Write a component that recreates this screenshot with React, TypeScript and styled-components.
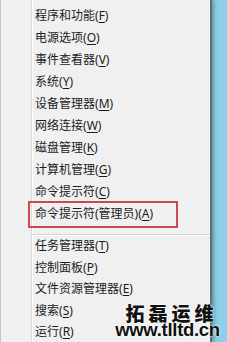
import React from "react";
import styled, { createGlobalStyle } from "styled-components";

const GlobalStyle = createGlobalStyle`
  html, body {
    margin: 0;
    padding: 0;
  }
  body {
    font-family: "Noto Sans", "Noto Sans CJK SC", sans-serif;
  }
`;

type Item = { label: string; key: string; highlight?: boolean };

const topItems: Item[] = [
  { label: "程序和功能", key: "F" },
  { label: "电源选项", key: "O" },
  { label: "事件查看器", key: "V" },
  { label: "系统", key: "Y" },
  { label: "设备管理器", key: "M" },
  { label: "网络连接", key: "W" },
  { label: "磁盘管理", key: "K" },
  { label: "计算机管理", key: "G" },
  { label: "命令提示符", key: "C" },
  { label: "命令提示符(管理员)", key: "A", highlight: true },
];

const bottomItems: Item[] = [
  { label: "任务管理器", key: "T" },
  { label: "控制面板", key: "P" },
  { label: "文件资源管理器", key: "E" },
  { label: "搜索", key: "S" },
  { label: "运行", key: "R" },
];

const App = () => {
  return (
    <Desktop>
      <GlobalStyle />
      <Menu>
        <Gutter />
        <Items>
          {topItems.map((it) => (
            <Row key={it.label} $highlight={it.highlight}>
              {it.label}(<u>{it.key}</u>)
            </Row>
          ))}
          <Separator />
          {bottomItems.map((it) => (
            <Row key={it.label} $compact>
              {it.label}(<u>{it.key}</u>)
            </Row>
          ))}
        </Items>
      </Menu>
      <Watermark>
        <span>拓磊运维</span>
        <small>www.tlltd.cn</small>
      </Watermark>
    </Desktop>
  );
};
export default App;

const Desktop = styled.div`
  position: relative;
  width: 227px;
  height: 342px;
  overflow: hidden;
  background-color: #8dd0e7;
`;

const Menu = styled.div`
  display: flex;
  width: 209px;
  height: 100%;
  background-color: #f0f0f0;
  border-left: 1px solid #c6c6c6;
  border-right: 2px solid #5f6f76;
  box-shadow: 2px 0 4px rgba(40, 70, 80, 0.45);
`;

const Gutter = styled.div`
  width: 30px;
  flex-shrink: 0;
  border-right: 1px solid #dadada;
  box-shadow: 1px 0 0 #ffffff;
`;

const Items = styled.div`
  flex: 1;
  padding-top: 5px;
  padding-left: 3px;
`;

const Row = styled.div<{ $highlight?: boolean; $compact?: boolean }>`
  position: relative;
  height: ${(p) => (p.$compact ? "21.5px" : "22px")};
  line-height: ${(p) => (p.$compact ? "21.5px" : "22px")};
  font-size: 12px;
  color: #1c1c1c;
  white-space: nowrap;
  u {
    text-underline-offset: 2px;
  }
  ${(p) =>
    p.$highlight &&
    `
    &::after {
      content: "";
      position: absolute;
      left: -7px;
      top: -2px;
      width: 146px;
      height: 23px;
      border: 2px solid #cd4a4c;
    }
  `}
`;

const Separator = styled.div`
  height: 1px;
  margin: 9px 0 0 -3px;
  background-color: #d6d6d6;
  box-shadow: 0 1px 0 #ffffff;
`;

const Watermark = styled.div`
  position: absolute;
  left: 110px;
  top: 304px;
  width: 115px;
  display: flex;
  flex-direction: column;
  align-items: center;
  color: #111111;
  text-shadow: 0 0 2px #ffffff, 0 0 2px #ffffff;
  span {
    font-family: "Noto Sans CJK SC", sans-serif;
    font-weight: 900;
    font-size: 19px;
    letter-spacing: 4px;
    line-height: 18px;
    padding-left: 8px;
  }
  small {
    font-family: "Liberation Sans", Arial, sans-serif;
    font-weight: 700;
    font-size: 18.5px;
    line-height: 16px;
    letter-spacing: -0.3px;
  }
`;
